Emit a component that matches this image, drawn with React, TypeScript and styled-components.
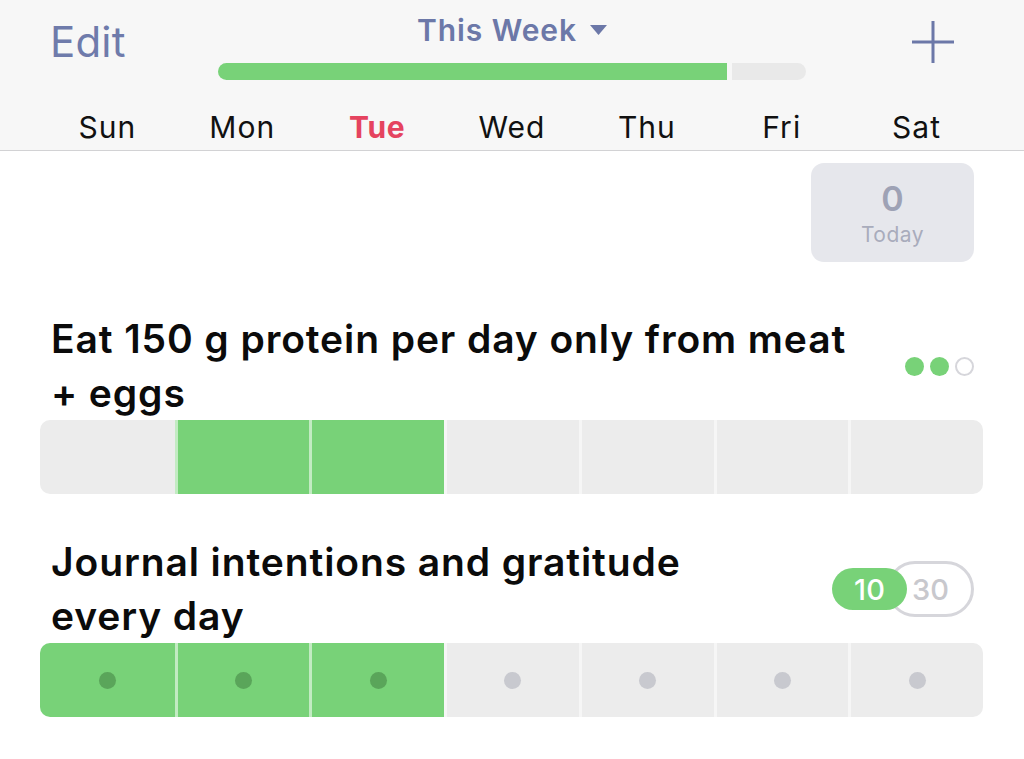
import React from 'react'
import styled, { createGlobalStyle } from 'styled-components'

const GlobalStyle = createGlobalStyle`
  html, body {
    margin: 0;
    padding: 0;
    background: #ffffff;
    font-family: Inter, "Noto Sans", "Liberation Sans", sans-serif;
    -webkit-font-smoothing: antialiased;
  }
`

const Page = styled.div`
  width: 1024px;
  min-height: 759px;
  background: #ffffff;
`

const Header = styled.header`
  background: #f7f7f7;
  border-bottom: 1px solid #d2d2d4;
  height: 151px;
  box-sizing: border-box;
`

const TopRow = styled.div`
  display: grid;
  grid-template-columns: 1fr 588px 1fr;
  height: 92px;
`

const EditButton = styled.div`
  font-size: 42px;
  color: #6f7bab;
  padding-left: 50px;
  padding-top: 16px;
  letter-spacing: 0.2px;
`

const Center = styled.div`
  display: flex;
  flex-direction: column;
  align-items: center;
  padding-top: 12px;
`

const WeekTitle = styled.div`
  display: flex;
  align-items: center;
  gap: 13px;
  font-size: 30px;
  font-weight: 600;
  color: #6c78a8;
  height: 36px;
  letter-spacing: 0.9px;
`

const Track = styled.div`
  display: flex;
  gap: 5px;
  width: 100%;
  height: 17px;
  margin-top: 15px;
  border-radius: 9px;
  overflow: hidden;
`

const TrackFill = styled.div<{ $grow: number; $done?: boolean }>`
  flex: ${p => p.$grow};
  background: ${p => (p.$done ? '#78d278' : '#e9e9e9')};
`

const PlusButton = styled.div`
  display: flex;
  justify-content: flex-end;
  padding-right: 69px;
  padding-top: 20px;
`

const DayRow = styled.div`
  display: grid;
  grid-template-columns: repeat(7, 1fr);
  padding: 17px 40px 0 40px;
`

const DayLabel = styled.div<{ $today?: boolean }>`
  text-align: center;
  font-size: 30px;
  line-height: 36px;
  letter-spacing: ${p => (p.$today ? '0.6px' : '1px')};
  color: ${p => (p.$today ? '#e5435f' : '#111111')};
  font-weight: ${p => (p.$today ? 700 : 400)};
`

const Content = styled.main`
  padding: 12px 41px 0 40px;
`

const TodayRow = styled.div`
  display: flex;
  justify-content: flex-end;
  padding-right: 9px;
`

const TodayBox = styled.div`
  width: 163px;
  height: 99px;
  border-radius: 13px;
  background: #e6e7ec;
  display: flex;
  flex-direction: column;
  align-items: center;
  justify-content: center;
  gap: 3px;
  padding-top: 2px;
  box-sizing: border-box;
`

const TodayCount = styled.div`
  font-size: 34px;
  font-weight: 600;
  color: #9ea2b5;
  line-height: 40px;
`

const TodayLabel = styled.div`
  font-size: 21px;
  color: #a9acbc;
  line-height: 26px;
  letter-spacing: 0.5px;
`

const Habit = styled.section<{ $top: number }>`
  margin-top: ${p => p.$top}px;
`

const HabitHead = styled.div`
  display: flex;
  align-items: center;
  gap: 40px;
  padding: 0 9px 0 11px;
`

const HabitTitle = styled.h2`
  flex: 1;
  margin: 0;
  font-size: 39px;
  line-height: 54px;
  font-weight: 600;
  color: #0b0b0b;
  letter-spacing: 0.9px;
`

const Dots = styled.div`
  display: flex;
  gap: 6px;
`

const Dot = styled.span<{ $on?: boolean }>`
  width: 19px;
  height: 19px;
  box-sizing: border-box;
  border-radius: 50%;
  background: ${p => (p.$on ? '#78d278' : 'transparent')};
  border: ${p => (p.$on ? 'none' : '2.5px solid #d6d6db')};
`

const Goal = styled.div`
  display: flex;
  align-items: center;
`

const GoalDone = styled.div`
  position: relative;
  z-index: 1;
  width: 75px;
  height: 42px;
  border-radius: 21px;
  background: #78d278;
  color: #ffffff;
  font-size: 29px;
  font-weight: 500;
  display: flex;
  align-items: center;
  justify-content: center;
`

const GoalTarget = styled.div`
  width: 87px;
  height: 56px;
  box-sizing: border-box;
  margin-left: -20px;
  border: 3px solid #d6d6db;
  border-radius: 28px;
  color: #c8c8cd;
  font-size: 29px;
  font-weight: 500;
  display: flex;
  align-items: center;
  justify-content: center;
`

const Week = styled.div`
  display: grid;
  grid-template-columns: repeat(7, 1fr);
  height: 74px;
  border-radius: 10px;
  overflow: hidden;
`

const Cell = styled.div<{ $done?: boolean }>`
  background: ${p => (p.$done ? '#78d278' : '#ececec')};
  display: flex;
  align-items: center;
  justify-content: center;
  & + & {
    border-left: 3px solid rgba(255, 255, 255, 0.55);
  }
`

const CellDot = styled.span<{ $done?: boolean }>`
  width: 17px;
  height: 17px;
  border-radius: 50%;
  background: ${p => (p.$done ? '#5aa55a' : '#c8c9cf')};
`

const days = ['Sun', 'Mon', 'Tue', 'Wed', 'Thu', 'Fri', 'Sat']

const Caret = () => (
  <svg width="17" height="10" viewBox="0 0 17 10">
    <path d="M0 0 H17 L8.5 10 Z" fill="#6c78a8" />
  </svg>
)

const Plus = () => (
  <svg width="44" height="44" viewBox="0 0 44 44">
    <path d="M22 1 V43 M1 22 H43" stroke="#6c78a8" strokeWidth="3" />
  </svg>
)

export default function App() {
  const protein = [false, true, true, false, false, false, false]
  const journal = [true, true, true, false, false, false, false]
  return (
    <Page>
      <GlobalStyle />
      <Header>
        <TopRow>
          <EditButton>Edit</EditButton>
          <Center>
            <WeekTitle>
              This Week <Caret />
            </WeekTitle>
            <Track>
              <TrackFill $grow={509} $done />
              <TrackFill $grow={74} />
            </Track>
          </Center>
          <PlusButton>
            <Plus />
          </PlusButton>
        </TopRow>
        <DayRow>
          {days.map(d => (
            <DayLabel key={d} $today={d === 'Tue'}>{d}</DayLabel>
          ))}
        </DayRow>
      </Header>
      <Content>
        <TodayRow>
          <TodayBox>
            <TodayCount>0</TodayCount>
            <TodayLabel>Today</TodayLabel>
          </TodayBox>
        </TodayRow>

        <Habit $top={50}>
          <HabitHead>
            <HabitTitle>Eat 150 g protein per day only from meat + eggs</HabitTitle>
            <Dots>
              <Dot $on />
              <Dot $on />
              <Dot />
            </Dots>
          </HabitHead>
          <Week>
            {protein.map((done, i) => (
              <Cell key={i} $done={done} />
            ))}
          </Week>
        </Habit>

        <Habit $top={41}>
          <HabitHead>
            <HabitTitle>Journal intentions and gratitude every day</HabitTitle>
            <Goal>
              <GoalDone>10</GoalDone>
              <GoalTarget>30</GoalTarget>
            </Goal>
          </HabitHead>
          <Week>
            {journal.map((done, i) => (
              <Cell key={i} $done={done}>
                <CellDot $done={done} />
              </Cell>
            ))}
          </Week>
        </Habit>
      </Content>
    </Page>
  )
}
